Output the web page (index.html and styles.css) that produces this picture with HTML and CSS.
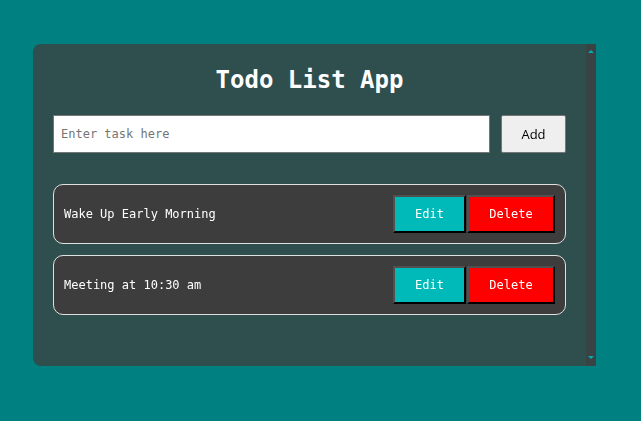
FILE: index.html
```html
<!DOCTYPE html>
<html lang="en">
<head>
<meta charset="utf-8">
<title>Todo List App</title>
<link rel="stylesheet" href="styles.css">
</head>
<body>
<div class="app">
  <div class="content">
    <h1 class="title">Todo List App</h1>
    <div class="entry">
      <input class="task-input" type="text" placeholder="Enter task here" autofocus>
      <button class="add-btn">Add</button>
    </div>
    <ul class="tasks">
      <li class="task">
        <span class="task-text">Wake Up Early Morning</span>
        <div class="actions">
          <button class="btn edit">Edit</button>
          <button class="btn delete">Delete</button>
        </div>
      </li>
      <li class="task">
        <span class="task-text">Meeting at 10:30 am</span>
        <div class="actions">
          <button class="btn edit">Edit</button>
          <button class="btn delete">Delete</button>
        </div>
      </li>
    </ul>
  </div>
  <div class="scrollbar">
    <span class="arrow up"></span>
    <span class="arrow down"></span>
  </div>
</div>
</body>
</html>
```
FILE: styles.css
```css
html, body {
  margin: 0;
  padding: 0;
}
body {
  background: #008080;
  width: 641px;
  height: 421px;
  font-family: "DejaVu Sans Mono", monospace;
}
.app {
  position: relative;
  margin: 44px 0 0 33px;
  width: 563px;
  height: 322px;
  background: #2f4f4f;
  border-radius: 8px 0 2px 8px;
  display: flex;
  overflow: hidden;
}
.content {
  flex: 1;
  padding: 18px 20px 0 20px;
}
.title {
  margin: 0 0 17px 0;
  height: 36px;
  line-height: 36px;
  text-align: center;
  color: #ffffff;
  font-size: 24px;
  font-weight: bold;
  font-family: "DejaVu Sans Mono", monospace;
}
.entry {
  display: flex;
  gap: 11px;
  height: 38px;
}
.task-input {
  flex: 1;
  box-sizing: border-box;
  height: 38px;
  margin: 0;
  padding: 0 7px;
  border: 1px solid #767676;
  background: #ffffff;
  font-family: "DejaVu Sans Mono", monospace;
  font-size: 12px;
  color: #000;
  outline: none;
}
.task-input::placeholder {
  color: #757575;
}
.add-btn {
  box-sizing: border-box;
  width: 65px;
  height: 38px;
  margin: 0;
  border: 1px solid #767676;
  border-radius: 2px;
  background: #efefef;
  color: #000;
  font-family: "Open Sans", "Liberation Sans", sans-serif;
  font-size: 13px;
}
.tasks {
  list-style: none;
  margin: 31px 0 0 0;
  padding: 0;
  display: flex;
  flex-direction: column;
  gap: 11px;
}
.task {
  box-sizing: border-box;
  height: 60px;
  border: 1px solid #e0e0e0;
  border-radius: 10px;
  background: #3d3d3d;
  padding: 0 10px;
  display: flex;
  align-items: center;
  justify-content: space-between;
}
.task-text {
  color: #ffffff;
  font-size: 12px;
}
.actions {
  display: flex;
  gap: 1px;
}
.btn {
  box-sizing: border-box;
  height: 38px;
  margin: 0;
  padding: 0 10px;
  border: 2px solid;
  border-color: #505050 #000000 #000000 #505050;
  color: #ffffff;
  font-family: "DejaVu Sans Mono", monospace;
  font-size: 12px;
}
.edit {
  background: #00b9b9;
  width: 73px;
}
.delete {
  background: #ff0000;
  width: 88px;
}
.scrollbar {
  width: 10px;
  background: #3a4343;
  display: flex;
  flex-direction: column;
  justify-content: space-between;
  align-items: center;
  padding: 6px 0 7px 0;
}
.arrow {
  width: 0;
  height: 0;
  border-left: 3.5px solid transparent;
  border-right: 3.5px solid transparent;
}
.arrow.up {
  border-bottom: 3px solid #00b0b0;
}
.arrow.down {
  border-top: 3px solid #00b0b0;
}
```
